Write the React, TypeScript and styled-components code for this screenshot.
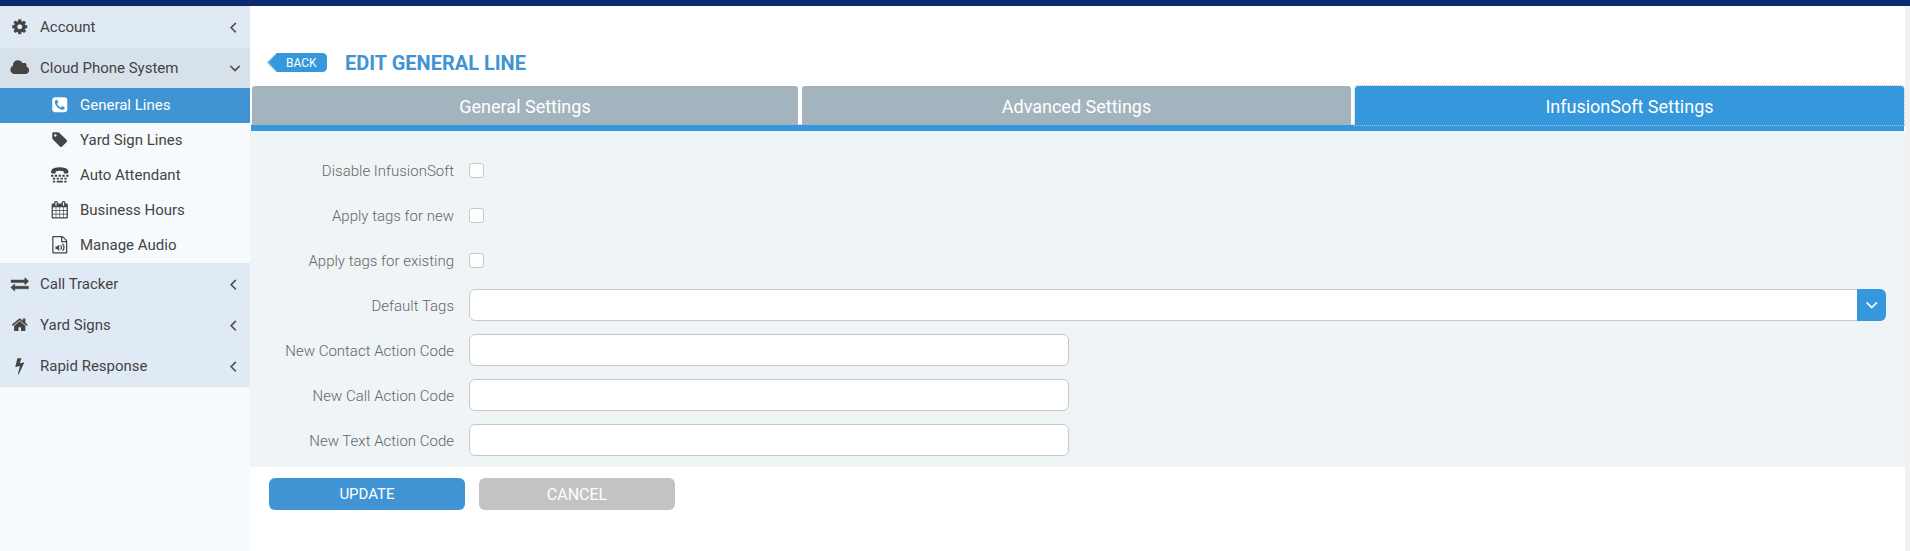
import React from "react";
import styled, { createGlobalStyle, css } from "styled-components";

const Global = createGlobalStyle`
  *, *::before, *::after { box-sizing: border-box; }
  html, body, #root { height: 100%; }
  body {
    margin: 0;
    overflow: hidden;
    background: #fff;
    font-family: Roboto, "Liberation Sans", sans-serif;
    font-size: 15px;
    color: #444;
  }
  button, input { font-family: inherit; }
`;

const Page = styled.div`
  height: 551px;
  display: flex;
  flex-direction: column;
`;

const TopBar = styled.div`
  flex: 0 0 6px;
  background: #0b2b6e;
`;

const Body = styled.div`
  flex: 1;
  display: flex;
  min-height: 0;
`;

const Sidebar = styled.nav`
  flex: 0 0 250px;
  background: #f6fafd;
`;

const MenuRow = styled.a<{ $open?: boolean; $last?: boolean }>`
  display: flex;
  align-items: center;
  height: ${(p) => (p.$last ? 42 : 41)}px;
  padding: 0 9px 0 8px;
  border-top: 1px solid #e4e7ea;
  ${(p) => p.$last && css`border-bottom: 1px solid #e2e4e6;`}
  background: ${(p) => (p.$open ? "#d7e1ea" : "#e0eaf5")};
`;

const MenuIcon = styled.span`
  display: flex;
  justify-content: center;
  width: 24px;
  margin-right: 8px;
`;

const MenuLabel = styled.span`
  flex: 1;
  font-size: 15px;
  line-height: 20px;
`;

const SubRow = styled.a<{ $active?: boolean }>`
  display: flex;
  align-items: center;
  height: 35px;
  padding: 0 0 2px 48px;
  color: ${(p) => (p.$active ? "#fff" : "#444")};
  background: ${(p) => (p.$active ? "#4194d3" : "transparent")};
`;

const Arrow = styled.span<{ $open?: boolean }>`
  display: flex;
  justify-content: center;
  width: 12px;
  margin-right: ${(p) => (p.$open ? 0 : 2.5)}px;
`;

const Main = styled.main`
  flex: 1;
  min-width: 0;
`;

const Gutter = styled.div`
  flex: 0 0 5px;
  background: #f1f1f1;
`;

const Heading = styled.header`
  display: flex;
  align-items: center;
  height: 80px;
  padding: 33px 0 0 17px;
`;

const BackLink = styled.a`
  position: relative;
  display: flex;
  align-items: center;
  width: 61px;
  height: 19px;
  padding: 1px 0 0 19px;
  font-size: 12px;
  color: #fff;
`;

const BackShape = styled.svg`
  position: absolute;
  inset: 0;
`;

const BackText = styled.span`
  position: relative;
`;

const Title = styled.h1`
  margin: 1px 0 0 17px;
  font-size: 20px;
  line-height: 24px;
  font-weight: 700;
  color: #4194d3;
`;

const Tabs = styled.div`
  display: grid;
  grid-template-columns: 546px 1fr 1fr;
  gap: 4px;
  height: 45px;
  margin: 0 1px 0 1px;
  padding-left: 1px;
  border-bottom: 6px solid #3598dc;
  box-shadow: inset 0 -1px #ddd;
`;

const Tab = styled.button<{ $active?: boolean }>`
  margin: 0;
  padding: 2px 0 0;
  border: 0;
  border-radius: 3px 3px 0 0;
  font-size: 18px;
  color: #fff;
  background: ${(p) => (p.$active ? "#3598dc" : "#a4b4be")};
  ${(p) =>
    p.$active &&
    css`
      outline: 1px dotted #b9c3ca;
    `}
`;

const Panel = styled.section`
  height: 336px;
  padding: 17px 19px 0 0;
  background: #eff4f7;
`;

const Field = styled.div`
  display: flex;
  align-items: center;
  height: 45px;
`;

const Label = styled.label`
  width: 204px;
  margin-right: 15px;
  text-align: right;
  font-size: 15px;
  font-weight: 300;
  color: #666;
`;

const Check = styled.input.attrs({ type: "checkbox" })`
  appearance: none;
  width: 15px;
  height: 15px;
  margin: 0;
  border: 1px solid #c8c8c8;
  border-radius: 3px;
  background: #fff;
`;

const TextInput = styled.input`
  width: 600px;
  height: 32px;
  margin: 0 0 1px;
  border: 1px solid #c8c8c8;
  border-radius: 6px;
  background: #fff;
`;

const Select = styled.div`
  flex: 1;
  display: flex;
  justify-content: flex-end;
  height: 32px;
  margin-bottom: 1px;
  border: 1px solid #c8c8c8;
  border-radius: 6px;
  background: #fff;
`;

const SelectButton = styled.span`
  display: flex;
  align-items: center;
  justify-content: center;
  width: 29px;
  height: 32px;
  margin: -1px -1px 0 0;
  border-radius: 0 6px 6px 0;
  color: #fff;
  background: #3598dc;
`;

const Actions = styled.div`
  display: flex;
  gap: 14px;
  padding: 11px 0 0 19px;
`;

const Button = styled.button<{ $muted?: boolean }>`
  width: 196px;
  height: 32px;
  padding: 0;
  border: 0;
  border-radius: 6px;
  font-size: ${(p) => (p.$muted ? 16 : 15)}px;
  color: #fff;
  background: ${(p) => (p.$muted ? "#c3c3c3" : "#4194d3")};
`;

const glyphs = {
  cog: "M1152 896q0-106-75-181t-181-75-181 75-75 181 75 181 181 75 181-75 75-181zm512-109v222q0 12-8 23t-20 13l-185 28q-19 54-39 91 35 50 107 138 10 12 10 25t-9 23q-27 37-99 108t-94 71q-12 0-26-9l-138-108q-44 23-91 38-16 136-29 186-7 28-36 28h-222q-14 0-24.500-8.500t-11.500-21.500l-28-184q-49-16-90-37l-141 107q-10 9-25 9-14 0-25-11-126-114-165-168-7-10-7-23 0-12 8-23 15-21 51-66.500t54-70.500q-27-50-41-99l-183-27q-13-2-21-12.500t-8-23.500v-222q0-12 8-23t19-13l186-28q14-46 39-92-40-57-107-138-10-12-10-24 0-10 9-23 26-36 98.500-107.500t94.500-71.500q13 0 26 10l138 107q44-23 91-38 16-136 29-186 7-28 36-28h222q14 0 24.500 8.500t11.500 21.500l28 184q49 16 90 37l142-107q9-9 24-9 13 0 25 10 129 119 165 170 7 8 7 22 0 12-8 23-15 21-51 66.500t-54 70.500q26 50 41 98l183 28q13 2 21 12.500t8 23.500z",
  cloud: "M1856 1152q0 159-112.500 271.500t-271.500 112.500h-1088q-185 0-316.500-131.500t-131.500-316.500q0-132 71-241.500t187-163.500q-2-28-2-43 0-212 150-362t362-150q158 0 286.500 88t187.500 230q70-62 166-62 106 0 181 75t75 181q0 75-41 138 129 30 213 134.500t84 239.500z",
  phone: "M1408 1193q0-11-2-16t-18-16.500-40.500-25-47.500-26.500-45.500-25-28.500-15q-5-3-19-13t-25-15-21-5q-15 0-36.500 20.500t-39.500 45-38.500 45-33.500 20.500q-7 0-16.500-3.500t-15.500-6.500-17-9.500-14-8.500q-99-55-170-126.500t-127-170.500q-2-3-8.500-14t-9.500-17-6.500-15.500-3.500-16.500q0-13 20.500-33.500t45-38.500 45-39.500 20.500-36.500q0-10-5-21t-15-25-13-19q-3-6-15-28.500t-25-45.500-26.500-47.500-25-40.500-16.500-18-16-2q-48 0-101 22-46 21-80 94.500t-34 130.500q0 16 2.500 34t5 30.500 9 33 10 29.500 12.500 33 11 30q60 164 216.500 320.500t320.500 216.500q6 2 30 11t33 12.500 29.500 10 33 9 30.500 5 34 2.500q57 0 130.500-34t94.500-80q22-53 22-101zm256-777v960q0 119-84.500 203.500t-203.500 84.500h-960q-119 0-203.500-84.500t-84.500-203.500v-960q0-119 84.500-203.500t203.500-84.500h960q119 0 203.500 84.500t84.500 203.500z",
  tag: "M576 448q0-53-37.500-90.500t-90.500-37.500-90.500 37.500-37.500 90.500 37.500 90.500 90.500 37.500 90.500-37.500 37.500-90.500zm1067 576q0 53-37 90l-491 492q-39 37-91 37-53 0-90-37l-715-716q-38-37-64.500-101t-26.500-117v-416q0-52 38-90t90-38h416q53 0 117 26.500t102 64.500l715 714q37 39 37 91z",
  tty: "M40 720q-50-60-30-190q40-230 330-320q250-80 556-80t556 80q290 90 330 320q20 130-30 190q-20 40-60 40h-330q-50 0-50-50v-150q-200-70-416-70t-416 70v150q0 50-50 50h-330q-40 0-60-40zM0 900h240v190h-240zM388 900h240v190h-240zM776 900h240v190h-240zM1164 900h240v190h-240zM1552 900h240v190h-240zM190 1200h240v190h-240zM580 1200h240v190h-240zM970 1200h240v190h-240zM1360 1200h240v190h-240zM190 1500h240v190h-240zM580 1500h630v190h-630zM1360 1500h240v190h-240z",
  calendar: "M192 1664h288v-288h-288v288zm352 0h320v-288h-320v288zm-352-352h288v-320h-288v320zm352 0h320v-320h-320v320zm-352-384h288v-288h-288v288zm736 736h320v-288h-320v288zm-384-736h320v-288h-320v288zm768 736h288v-288h-288v288zm-384-352h320v-320h-320v320zm-352-864v-288q0-13-9.500-22.500t-22.500-9.500h-64q-13 0-22.500 9.500t-9.500 22.500v288q0 13 9.500 22.500t22.500 9.500h64q13 0 22.500-9.500t9.500-22.500zm736 864h288v-320h-288v320zm-384-384h320v-288h-320v288zm384 0h288v-288h-288v288zm32-480v-288q0-13-9.500-22.500t-22.500-9.500h-64q-13 0-22.500 9.500t-9.500 22.500v288q0 13 9.500 22.500t22.500 9.500h64q13 0 22.500-9.500t9.500-22.500zm384-64v1280q0 52-38 90t-90 38h-1408q-52 0-90-38t-38-90v-1280q0-52 38-90t90-38h128v-96q0-66 47-113t113-47h64q66 0 113 47t47 113v96h384v-96q0-66 47-113t113-47h64q66 0 113 47t47 113v96h128q52 0 90 38t38 90z",
  audio: "M1596 380q28 28 48 76t20 88v1152q0 40-28 68t-68 28h-1344q-40 0-68-28t-28-68v-1600q0-40 28-68t68-28h896q40 0 88 20t76 48zm-444-244v376h376q-10-29-22-41l-313-313q-12-12-41-22zm384 1528v-1024h-416q-40 0-68-28t-28-68v-416h-768v1536h1280zM820 905q20 8 20 29v544q0 21-20 29q-8 3-12 3q-12 0-23-9l-166-167h-131q-14 0-23-9t-9-23v-192q0-14 9-23t23-9h131l166-167q16-15 35-6zM1217 1539q31 0 50-24q129-159 129-363t-129-363q-20-26-54-26q-42 0-59 36q-17 34 9 67q100 120 100 286t-100 286q-17 22-14 47t24 42q20 12 44 12zM1009 1408q27 0 47-20q87-93 87-219t-87-219q-18-19-45-20t-46 17-20 44.500 18 46.500q52 57 52 131t-52 131q-19 20-18 46.500t20 44.500q20 17 44 17z",
  exchange: "M1792 1184v192q0 13-9.500 22.500t-22.500 9.500h-1376v192q0 13-9.500 22.500t-22.500 9.500q-12 0-24-10l-319-320q-9-9-9-22 0-14 9-23l320-320q9-9 23-9 13 0 22.500 9.500t9.500 22.500v192h1376q13 0 22.500 9.500t9.500 22.500zm0-544q0 14-9 23l-320 320q-9 9-23 9-13 0-22.500-9.500t-9.500-22.500v-192h-1376q-13 0-22.500-9.500t-9.500-22.500v-192q0-13 9.500-22.500t22.500-9.500h1376v-192q0-14 9-23t23-9q12 0 24 10l319 319q9 9 9 23z",
  home: "M1472 992v480q0 26-19 45t-45 19h-384v-384h-256v384h-384q-26 0-45-19t-19-45v-480q0-1 .5-3t.5-3l575-474 575 474q1 2 1 6zm223-69l-62 74q-8 9-21 11h-3q-13 0-21-7l-692-577-692 577q-12 8-24 7-13-2-21-11l-62-74q-8-10-7-23.500t11-21.500l719-599q32-26 76-26t76 26l244 204v-195q0-14 9-23t23-9h192q14 0 23 9t9 23v408l219 182q10 8 11 21.500t-7 23.500z",
  bolt: "M1333 566q18 20 7 44l-540 1157q-13 25-42 25-4 0-14-2-17-5-25.500-19t-4.500-30l197-808-406 101q-4 1-12 1-18 0-31-11-18-15-13-39l201-825q4-14 16-23t28-9h328q19 0 32 12.500t13 29.500q0 8-5 18l-171 463 396-98q8-2 12-2 19 0 34 15z",
  left: "M1203 544q0 13-10 23l-393 393 393 393q10 10 10 23t-10 23l-50 50q-10 10-23 10t-23-10l-466-466q-10-10-10-23t10-23l466-466q10-10 23-10t23 10l50 50q10 10 10 23z",
  down: "M1395 736q0 13-10 23l-466 466q-10 10-23 10t-23-10l-466-466q-10-10-10-23t10-23l50-50q10-10 23-10t23 10l393 393 393-393q10-10 23-10t23 10l50 50q10 10 10 23z",
};

type GlyphName = keyof typeof glyphs;

const GlyphSvg = styled.svg<{ $weight: number }>`
  display: block;
  flex: none;
  overflow: visible;
  fill: currentColor;
  stroke: currentColor;
  stroke-width: ${(p) => p.$weight};
`;

type GlyphProps = { name: GlyphName; size?: number; weight?: number };

const Glyph = ({ name, size = 17.5, weight = 0 }: GlyphProps) => (
  <GlyphSvg width={size} height={size} viewBox="0 0 1792 1792" $weight={weight}>
    <path d={glyphs[name]} />
  </GlyphSvg>
);

type MenuProps = { icon: GlyphName; label: string; open?: boolean; last?: boolean };

const MenuItem = ({ icon, label, open, last }: MenuProps) => (
  <MenuRow $open={open} $last={last}>
    <MenuIcon>
      <Glyph name={icon} weight={icon === "exchange" ? 50 : 0} />
    </MenuIcon>
    <MenuLabel>{label}</MenuLabel>
    <Arrow $open={open}>
      <Glyph name={open ? "down" : "left"} size={18} weight={25} />
    </Arrow>
  </MenuRow>
);

const subItems: { icon: GlyphName; label: string }[] = [
  { icon: "phone", label: "General Lines" },
  { icon: "tag", label: "Yard Sign Lines" },
  { icon: "tty", label: "Auto Attendant" },
  { icon: "calendar", label: "Business Hours" },
  { icon: "audio", label: "Manage Audio" },
];

const App = () => (
  <>
    <Global />
    <Page>
      <TopBar />
      <Body>
        <Sidebar>
          <MenuItem icon="cog" label="Account" />
          <MenuItem icon="cloud" label="Cloud Phone System" open />
          {subItems.map((item, i) => (
            <SubRow key={item.label} $active={i === 0}>
              <MenuIcon>
                <Glyph name={item.icon} />
              </MenuIcon>
              <MenuLabel>{item.label}</MenuLabel>
            </SubRow>
          ))}
          <MenuItem icon="exchange" label="Call Tracker" />
          <MenuItem icon="home" label="Yard Signs" />
          <MenuItem icon="bolt" label="Rapid Response" last />
        </Sidebar>
        <Main>
          <Heading>
            <BackLink>
              <BackShape width="61" height="19" viewBox="0 0 61 19">
                <path d="M10.500 0L0.500 9.500L10.500 19" fill="none" stroke="#a9c9e0" strokeWidth="1.500" />
                <path d="M10 0H55Q60 0 60 5V14Q60 19 55 19H10L1.500 9.500Z" fill="#3598dc" />
              </BackShape>
              <BackText>BACK</BackText>
            </BackLink>
            <Title>EDIT GENERAL LINE</Title>
          </Heading>
          <Tabs>
            <Tab>General Settings</Tab>
            <Tab>Advanced Settings</Tab>
            <Tab $active>InfusionSoft Settings</Tab>
          </Tabs>
          <Panel>
            {["Disable InfusionSoft", "Apply tags for new", "Apply tags for existing"].map((label) => (
              <Field key={label}>
                <Label>{label}</Label>
                <Check />
              </Field>
            ))}
            <Field>
              <Label>Default Tags</Label>
              <Select>
                <SelectButton>
                  <Glyph name="down" size={19.5} weight={25} />
                </SelectButton>
              </Select>
            </Field>
            {["New Contact Action Code", "New Call Action Code", "New Text Action Code"].map((label) => (
              <Field key={label}>
                <Label>{label}</Label>
                <TextInput />
              </Field>
            ))}
          </Panel>
          <Actions>
            <Button>UPDATE</Button>
            <Button $muted>CANCEL</Button>
          </Actions>
        </Main>
        <Gutter />
      </Body>
    </Page>
  </>
);

export default App;
